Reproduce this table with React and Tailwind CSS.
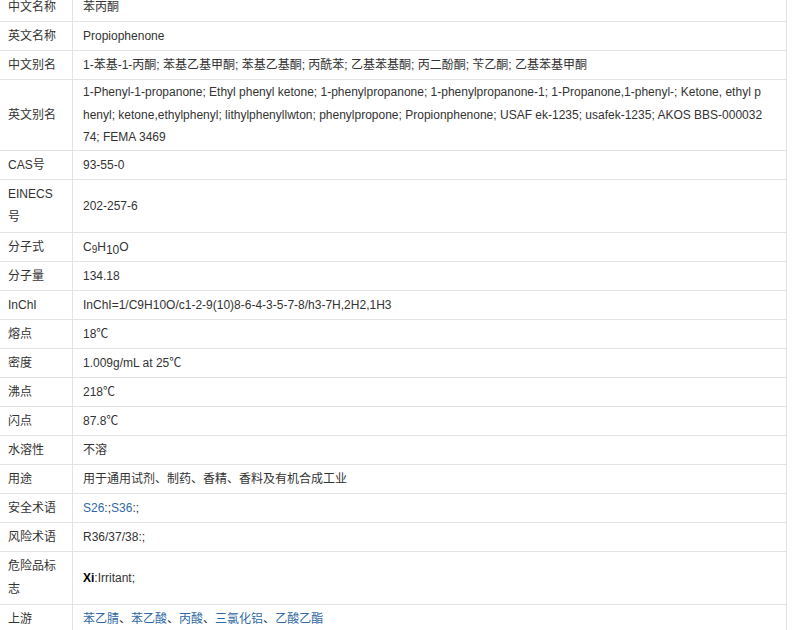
const rows = [
  { label: "中文名称", value: "苯丙酮" },
  { label: "英文名称", value: "Propiophenone" },
  {
    label: "中文别名",
    value: "1-苯基-1-丙酮; 苯基乙基甲酮; 苯基乙基酮; 丙酰苯; 乙基苯基酮; 丙二酚酮; 苄乙酮; 乙基苯基甲酮",
  },
  {
    label: "英文别名",
    h: "h-[71px]",
    lines: [
      "1-Phenyl-1-propanone; Ethyl phenyl ketone; 1-phenylpropanone; 1-phenylpropanone-1; 1-Propanone,1-phenyl-; Ketone, ethyl p",
      "henyl; ketone,ethylphenyl; lithylphenyllwton; phenylpropone; Propionphenone; USAF ek-1235; usafek-1235; AKOS BBS-000032",
      "74; FEMA 3469",
    ],
  },
  { label: "CAS号", value: "93-55-0" },
  { label: ["EINECS", "号"], h: "h-[53px]", value: "202-257-6" },
  {
    label: "分子式",
    value: (
      <span>
        C<sub className="text-[10px] relative top-[2px] align-baseline">9</sub>H
        <sub className="text-[12px] relative top-[3px] align-baseline">10</sub>O
      </span>
    ),
  },
  { label: "分子量", value: "134.18" },
  { label: "InChI", value: "InChI=1/C9H10O/c1-2-9(10)8-6-4-3-5-7-8/h3-7H,2H2,1H3" },
  { label: "熔点", value: "18℃" },
  { label: "密度", value: "1.009g/mL at 25℃" },
  { label: "沸点", value: "218℃" },
  { label: "闪点", value: "87.8℃" },
  { label: "水溶性", value: "不溶" },
  { label: "用途", value: "用于通用试剂、制药、香精、香料及有机合成工业" },
  {
    label: "安全术语",
    value: (
      <span>
        <a className="text-[#2f6aa5]">S26</a>:;<a className="text-[#2f6aa5]">S36</a>:;
      </span>
    ),
  },
  { label: "风险术语", value: "R36/37/38:;" },
  {
    label: ["危险品标", "志"],
    h: "h-[53px]",
    value: (
      <span>
        <b className="text-black">Xi</b>:Irritant;
      </span>
    ),
  },
  {
    label: "上游",
    value: (
      <span>
        {["苯乙腈", "苯乙酸", "丙酸", "三氯化铝", "乙酸乙酯"].map((t, i) => (
          <span key={t}>
            {i > 0 && "、"}
            <a className="text-[#2f6aa5]">{t}</a>
          </span>
        ))}
      </span>
    ),
  },
];

const App = () => {
  return (
    <div
      className="bg-white w-[793px] h-[630px] overflow-hidden text-[12px] text-[#333]"
      style={{ fontFamily: '"Liberation Sans", Arial, "Noto Sans CJK SC", sans-serif' }}
    >
      <div className="w-[788px] -ml-px -mt-[7px] border-r border-[#e3e3e3]">
        {rows.map((row, i) => (
          <div
            key={i}
            className={`grid grid-cols-[74px_1fr] border-b border-[#e3e3e3] ${row.h || "h-[29px]"}`}
          >
            <div className="flex items-center pl-[9px] border-r border-[#e3e3e3] leading-[23px]">
              {Array.isArray(row.label) ? (
                <div>
                  {row.label.map((l) => (
                    <div key={l}>{l}</div>
                  ))}
                </div>
              ) : (
                row.label
              )}
            </div>
            <div className="flex items-center pl-[10px] leading-[22.5px] whitespace-nowrap">
              {row.lines ? (
                <div>
                  {row.lines.map((l) => (
                    <div key={l}>{l}</div>
                  ))}
                </div>
              ) : (
                row.value
              )}
            </div>
          </div>
        ))}
      </div>
    </div>
  );
};

export default App;
